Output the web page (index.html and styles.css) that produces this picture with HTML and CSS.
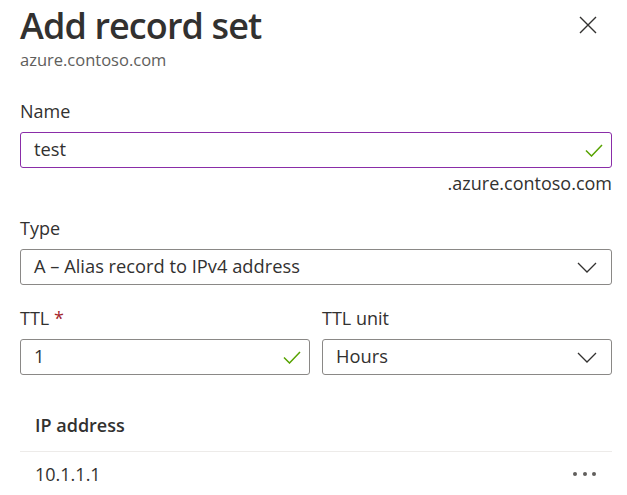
FILE: index.html
```html
<!DOCTYPE html>
<html>
<head>
<meta charset="utf-8">
<link rel="stylesheet" href="styles.css">
</head>
<body>
<div class="panel">
  <header class="head">
    <div class="titles">
      <h1 class="title">Add record set</h1>
      <div class="subtitle">azure.contoso.com</div>
    </div>
    <button class="close" aria-label="Close">
      <svg width="18" height="18" viewBox="0 0 18 18"><path d="M1 1L17 17M17 1L1 17" stroke="#323130" stroke-width="1.4" fill="none"/></svg>
    </button>
  </header>

  <div class="field field-name">
    <label class="label">Name</label>
    <div class="box box-focus">
      <span class="value">test</span>
      <svg class="check" width="18" height="13" viewBox="0 0 18 13"><path d="M1 6.5L6.5 12L17 1" stroke="#57a300" stroke-width="1.5" fill="none"/></svg>
    </div>
    <div class="suffix">.azure.contoso.com</div>
  </div>

  <div class="field field-type">
    <label class="label">Type</label>
    <div class="box">
      <span class="value">A – Alias record to IPv4 address</span>
      <svg class="chev" width="20" height="11" viewBox="0 0 20 11"><path d="M1 1L10 10L19 1" stroke="#323130" stroke-width="1.3" fill="none"/></svg>
    </div>
  </div>

  <div class="row2">
    <div class="field">
      <label class="label">TTL <span class="req">*</span></label>
      <div class="box">
        <span class="value">1</span>
        <svg class="check" width="18" height="13" viewBox="0 0 18 13"><path d="M1 6.5L6.5 12L17 1" stroke="#57a300" stroke-width="1.5" fill="none"/></svg>
      </div>
    </div>
    <div class="field">
      <label class="label">TTL unit</label>
      <div class="box">
        <span class="value">Hours</span>
        <svg class="chev" width="20" height="11" viewBox="0 0 20 11"><path d="M1 1L10 10L19 1" stroke="#323130" stroke-width="1.3" fill="none"/></svg>
      </div>
    </div>
  </div>

  <div class="grid">
    <div class="grid-head">IP address</div>
    <div class="grid-row">
      <span class="cell">10.1.1.1</span>
      <span class="more"><i></i><i></i><i></i></span>
    </div>
  </div>
</div>
</body>
</html>
```

FILE: styles.css
```css
html, body {
  margin: 0;
  padding: 0;
  background: #ffffff;
}
body {
  font-family: "Open Sans", "Noto Sans", sans-serif;
  color: #323130;
  overflow: hidden;
}
.panel {
  padding: 0 15px 0 20px;
  width: 592px;
}
.head {
  display: flex;
  justify-content: space-between;
  align-items: flex-start;
}
.title {
  margin: 0;
  padding-top: 2px;
  font-size: 36px;
  font-weight: 600;
  line-height: 47px;
  letter-spacing: -0.9px;
}
.subtitle {
  font-size: 16.5px;
  line-height: 22px;
  color: #605e5c;
}
.close {
  border: 0;
  background: none;
  padding: 0;
  margin: 16px 15px 0 0;
  width: 18px;
  height: 18px;
  display: flex;
}
.field {
  display: flex;
  flex-direction: column;
}
.field-name {
  margin-top: 28px;
}
.label {
  font-size: 18px;
  line-height: 24px;
  margin-bottom: 9px;
}
.req {
  color: #a4262c;
}
.box {
  height: 36px;
  box-sizing: border-box;
  border: 1px solid #8a8886;
  border-radius: 3px;
  display: flex;
  align-items: center;
  justify-content: space-between;
  padding: 0 14px 0 13px;
}
.box-focus {
  border-color: #8a2da8;
}
.value {
  font-size: 18.3px;
  line-height: 24px;
  margin-top: -2px;
}
.check {
  margin-right: -6px;
}
.suffix {
  text-align: right;
  font-size: 18px;
  line-height: 24px;
  margin-top: 3px;
}
.field-type {
  margin-top: 21px;
}
.row2 {
  display: grid;
  grid-template-columns: 1fr 1fr;
  column-gap: 12px;
  margin-top: 21px;
}
.grid {
  margin-top: 38px;
}
.grid-head {
  font-size: 18px;
  font-weight: 600;
  padding: 0 15px;
  line-height: 24px;
  padding-bottom: 14px;
  border-bottom: 1px solid #edebe9;
}
.grid-row {
  display: flex;
  justify-content: space-between;
  align-items: center;
  padding: 10px 16px 0 15px;
}
.cell {
  font-size: 18px;
  line-height: 24px;
}
.more {
  display: flex;
  gap: 5.5px;
}
.more i {
  width: 4px;
  height: 4px;
  border-radius: 50%;
  background: #605e5c;
}
```
